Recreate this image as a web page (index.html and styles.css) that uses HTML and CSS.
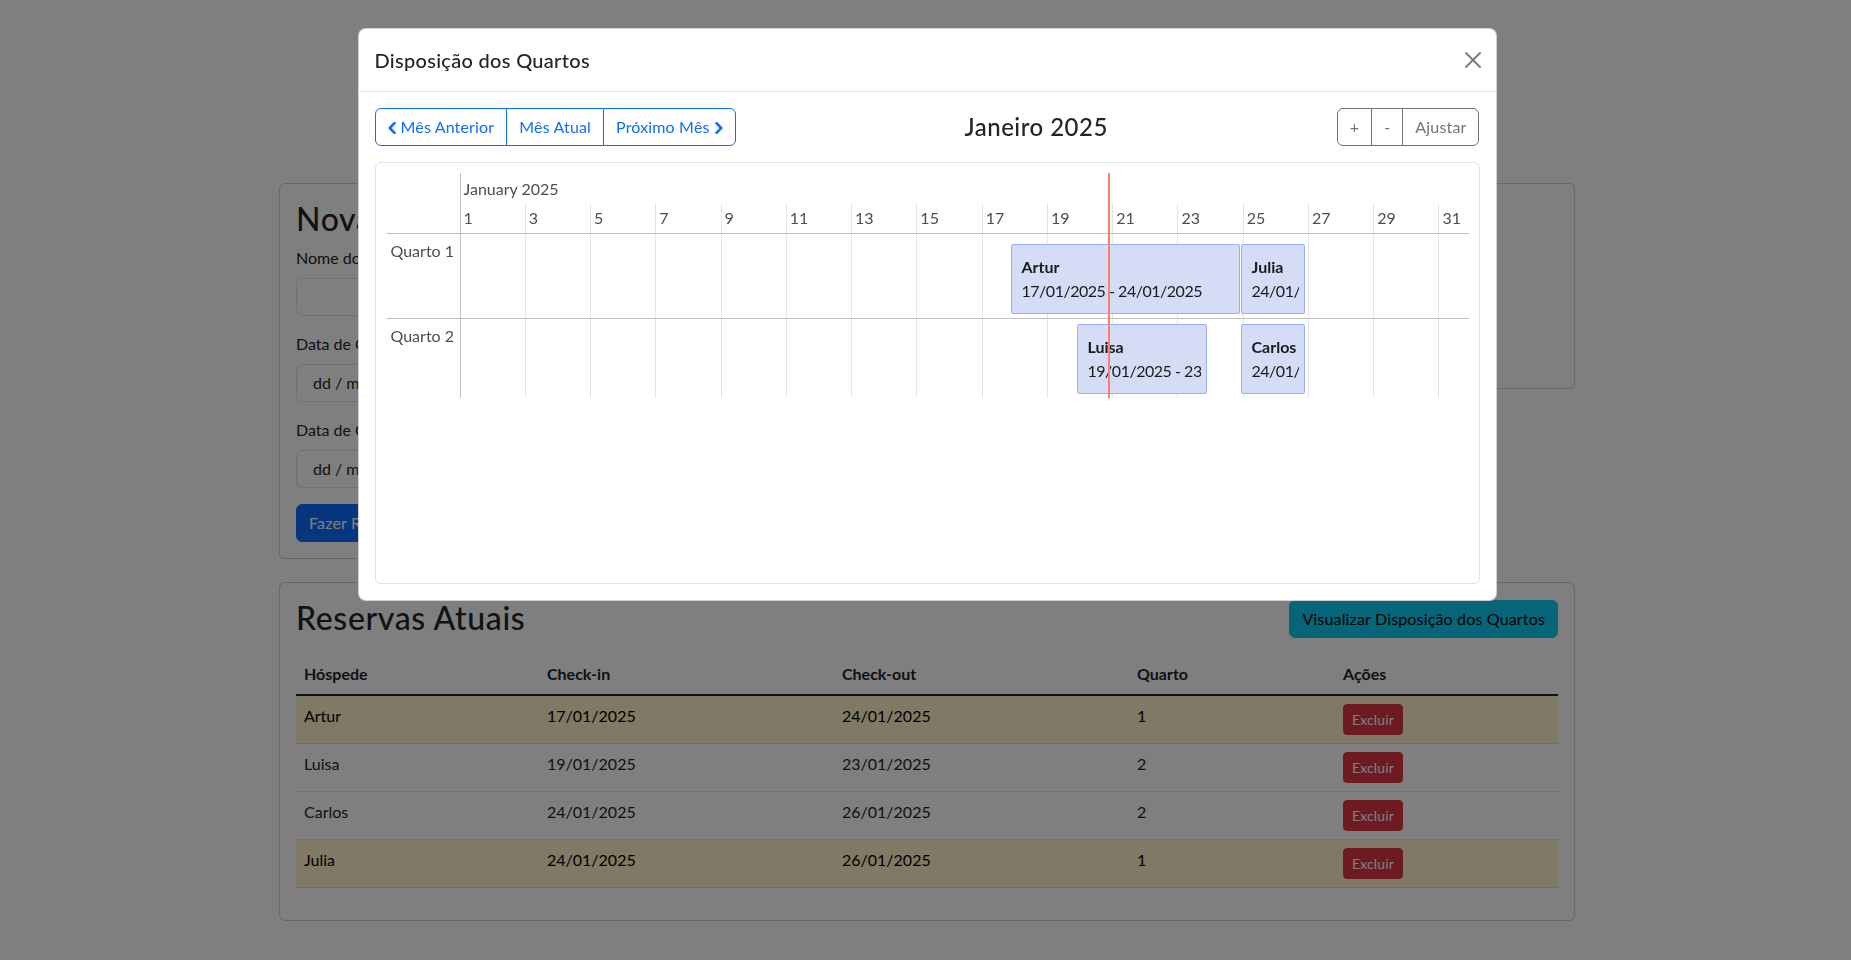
FILE: index.html
```html
<!DOCTYPE html>
<html lang="pt-BR">
<head>
<meta charset="utf-8">
<title>Reservas</title>
<link rel="stylesheet" href="styles.css">
</head>
<body>
<div class="page">
  <div class="top-row">
    <div class="card">
      <div class="card-body">
        <h2 class="card-title">Nova Reserva</h2>
        <form class="form">
          <div class="field">
            <label class="form-label">Nome do Hóspede</label>
            <div class="form-control"></div>
          </div>
          <div class="field">
            <label class="form-label">Data de Check-in</label>
            <div class="form-control date">dd / mm / aaaa</div>
          </div>
          <div class="field">
            <label class="form-label">Data de Check-out</label>
            <div class="form-control date">dd / mm / aaaa</div>
          </div>
          <button type="button" class="btn btn-primary">Fazer Reserva</button>
        </form>
      </div>
    </div>
    <div class="card side-card">
      <div class="card-body"></div>
    </div>
  </div>

  <div class="card">
    <div class="card-body">
      <div class="list-head">
        <h2 class="card-title flush">Reservas Atuais</h2>
        <button type="button" class="btn btn-info">Visualizar Disposição dos Quartos</button>
      </div>
      <table class="table">
        <thead>
          <tr>
            <th class="c1">Hóspede</th>
            <th class="c2">Check-in</th>
            <th class="c3">Check-out</th>
            <th class="c4">Quarto</th>
            <th class="c5">Ações</th>
          </tr>
        </thead>
        <tbody>
          <tr class="warn">
            <td>Artur</td><td>17/01/2025</td><td>24/01/2025</td><td>1</td>
            <td><button type="button" class="btn btn-sm btn-danger">Excluir</button></td>
          </tr>
          <tr>
            <td>Luisa</td><td>19/01/2025</td><td>23/01/2025</td><td>2</td>
            <td><button type="button" class="btn btn-sm btn-danger">Excluir</button></td>
          </tr>
          <tr>
            <td>Carlos</td><td>24/01/2025</td><td>26/01/2025</td><td>2</td>
            <td><button type="button" class="btn btn-sm btn-danger">Excluir</button></td>
          </tr>
          <tr class="warn">
            <td>Julia</td><td>24/01/2025</td><td>26/01/2025</td><td>1</td>
            <td><button type="button" class="btn btn-sm btn-danger">Excluir</button></td>
          </tr>
        </tbody>
      </table>
    </div>
  </div>
</div>

<div class="backdrop"></div>

<div class="modal">
  <div class="modal-dialog">
    <div class="modal-content">
      <div class="modal-header">
        <h5 class="modal-title">Disposição dos Quartos</h5>
        <button type="button" class="btn-close" aria-label="Fechar">
          <svg viewBox="0 0 16 16" width="16" height="16"><path d="M.293.293a1 1 0 0 1 1.414 0L8 6.586 14.293.293a1 1 0 1 1 1.414 1.414L9.414 8l6.293 6.293a1 1 0 0 1-1.414 1.414L8 9.414l-6.293 6.293a1 1 0 0 1-1.414-1.414L6.586 8 .293 1.707a1 1 0 0 1 0-1.414z" fill="#000"/></svg>
        </button>
      </div>
      <div class="modal-body">
        <div class="toolbar">
          <div class="btn-group">
            <button type="button" class="btn btn-outline-primary"><svg class="chev" viewBox="0 0 8 12" width="8" height="12"><path d="M6.5 1.2 1.8 6l4.7 4.8" fill="none" stroke="currentColor" stroke-width="2.6" stroke-linecap="round" stroke-linejoin="round"/></svg>Mês Anterior</button>
            <button type="button" class="btn btn-outline-primary">Mês Atual</button>
            <button type="button" class="btn btn-outline-primary">Próximo Mês<svg class="chev after" viewBox="0 0 8 12" width="8" height="12"><path d="M1.5 1.2 6.2 6l-4.7 4.8" fill="none" stroke="currentColor" stroke-width="2.6" stroke-linecap="round" stroke-linejoin="round"/></svg></button>
          </div>
          <h4 class="month-title">Janeiro 2025</h4>
          <div class="btn-group">
            <button type="button" class="btn btn-outline-secondary">+</button>
            <button type="button" class="btn btn-outline-secondary">-</button>
            <button type="button" class="btn btn-outline-secondary">Ajustar</button>
          </div>
        </div>

        <div class="chart">
          <div class="timeline">
            <div class="tl-corner"></div>
            <div class="tl-major">January 2025</div>
            <div class="tl-grid">
              <span></span><span></span><span></span><span></span><span></span><span></span><span></span><span></span><span></span><span></span><span></span><span></span><span></span><span></span><span></span><span class="last"></span>
            </div>
            <div class="tl-minor">
              <span>1</span><span>3</span><span>5</span><span>7</span><span>9</span><span>11</span><span>13</span><span>15</span><span>17</span><span>19</span><span>21</span><span>23</span><span>25</span><span>27</span><span>29</span><span class="last">31</span>
            </div>

            <div class="tl-label row-1">Quarto 1</div>
            <div class="tl-lane row-1 lane-1">
              <div class="tl-item" style="left:550px;width:229px"><div class="tl-item-content"><div class="tl-name">Artur</div><div class="tl-dates">17/01/2025 - 24/01/2025</div></div></div>
              <div class="tl-item" style="left:780px;width:64px"><div class="tl-item-content"><div class="tl-name">Julia</div><div class="tl-dates">24/01/2025 - 26/01/2025</div></div></div>
            </div>

            <div class="tl-label row-2">Quarto 2</div>
            <div class="tl-lane row-2 lane-2">
              <div class="tl-item" style="left:616px;width:130px"><div class="tl-item-content"><div class="tl-name">Luisa</div><div class="tl-dates">19/01/2025 - 23/01/2025</div></div></div>
              <div class="tl-item" style="left:780px;width:64px"><div class="tl-item-content"><div class="tl-name">Carlos</div><div class="tl-dates">24/01/2025 - 26/01/2025</div></div></div>
            </div>

            <div class="tl-now"></div>
          </div>
        </div>
      </div>
    </div>
  </div>
</div>
</body>
</html>
```

FILE: styles.css
```css
* { box-sizing: border-box; }

html, body { margin: 0; }

body {
  font-family: Lato, "Noto Sans", sans-serif;
  font-size: 16px;
  line-height: 1.5;
  color: #212529;
  background: #fff;
}

/* ---------- page behind the modal ---------- */
.page {
  width: 1320px;
  margin-left: calc(50% - 658.5px);
  padding: 183px 12px 0;
}

.top-row {
  display: grid;
  grid-template-columns: 1fr 1fr;
  gap: 24px;
  align-items: start;
  margin-bottom: 23px;
}

.card {
  background: #fff;
  border: 1px solid rgba(0, 0, 0, .175);
  border-radius: 6px;
}

.card-body { padding: 16px; }

.side-card .card-body { min-height: 204px; }

.card-title {
  margin: 0 0 8px;
  font-size: 32px;
  font-weight: 500;
  line-height: 1.2;
  letter-spacing: .02em;
}

.card-title.flush { margin: 0; }

.field { margin-bottom: 16px; }

.form-label {
  display: inline-block;
  margin-bottom: 8px;
}

.form-control {
  display: block;
  width: 100%;
  height: 38px;
  padding: 6px 12px;
  border: 1px solid #dee2e6;
  border-radius: 6px;
  background: #fff;
}

.form-control.date { padding-left: 16px; }

.btn {
  display: inline-block;
  font-family: inherit;
  font-size: 16px;
  font-weight: 400;
  line-height: 1.5;
  padding: 6px 12px;
  border: 1px solid transparent;
  border-radius: 6px;
  background: transparent;
  color: #212529;
  white-space: nowrap;
  letter-spacing: .01em;
  cursor: pointer;
}

.btn-sm {
  padding: 4px 8px;
  font-size: 14px;
  border-radius: 4px;
}

.btn-primary { background: #0d6efd; border-color: #0d6efd; color: #fff; }
.btn-info { background: #0dcaf0; border-color: #0dcaf0; color: #000; }
.btn-danger { background: #dc3545; border-color: #dc3545; color: #fff; }

.list-head {
  display: flex;
  justify-content: space-between;
  align-items: center;
  margin-bottom: 16px;
}

.table {
  width: 100%;
  border-collapse: collapse;
  margin-bottom: 16px;
  color: #212529;
}

.table th,
.table td {
  padding: 8px;
  text-align: left;
  vertical-align: top;
  border-bottom: 1px solid #dee2e6;
}

.table th { font-weight: 700; }

.table tbody { border-top: 2px solid #212529; }

.table .c1 { width: 243px; }
.table .c2 { width: 295px; }
.table .c3 { width: 295px; }
.table .c4 { width: 206px; }
.table .c5 { width: 223px; }

.table tr.warn td {
  background: #fff3cd;
  color: #000;
  border-bottom-color: #e6dbb9;
}

/* ---------- modal ---------- */
.backdrop {
  position: fixed;
  inset: 0;
  background: rgba(0, 0, 0, .5);
}

.modal {
  position: fixed;
  inset: 0;
  padding-left: 3px;
}

.modal-dialog {
  width: 1139px;
  margin: 28px auto 0;
}

.modal-content {
  background: #fff;
  border: 1px solid rgba(0, 0, 0, .175);
  border-radius: 8px;
}

.modal-header {
  display: flex;
  justify-content: space-between;
  align-items: center;
  padding: 16px;
  border-bottom: 1px solid #dee2e6;
}

.modal-title {
  margin: 0;
  font-size: 20px;
  font-weight: 500;
  line-height: 1.5;
  letter-spacing: .015em;
}

.btn-close {
  display: block;
  width: 16px;
  height: 16px;
  padding: 0;
  margin-right: -1px;
  border: 0;
  background: transparent;
  opacity: .5;
  cursor: pointer;
}

.btn-close svg { display: block; }

.modal-body { padding: 16px; }

.toolbar {
  display: flex;
  justify-content: space-between;
  align-items: center;
  margin-bottom: 16px;
}

.month-title {
  margin: 0;
  font-size: 24px;
  font-weight: 500;
  line-height: 1.2;
  letter-spacing: .02em;
}

.btn-group { display: inline-flex; }

.btn-group .btn + .btn { margin-left: -1px; }

.btn-group .btn:not(:first-child) {
  border-top-left-radius: 0;
  border-bottom-left-radius: 0;
}

.btn-group .btn:not(:last-child) {
  border-top-right-radius: 0;
  border-bottom-right-radius: 0;
}

.btn-outline-primary { color: #0d6efd; border-color: #0d6efd; }
.btn-outline-secondary { color: #6c757d; border-color: #6c757d; }

.chev {
  display: inline-block;
  vertical-align: -1px;
  margin-right: 5px;
}

.chev.after {
  margin-right: 0;
  margin-left: 5px;
}

/* ---------- timeline ---------- */
.chart {
  height: 422px;
  padding: 10px;
  border: 1px solid #dee2e6;
  border-radius: 6px;
}

.timeline {
  position: relative;
  display: grid;
  grid-template-columns: 74px 1fr;
  grid-template-rows: 30px 30px 85px 80px;
  color: #4d4d4d;
}

.tl-corner {
  grid-column: 1;
  grid-row: 1 / span 2;
}

.tl-major {
  grid-column: 2;
  grid-row: 1;
  border-left: 1px solid #bfbfbf;
  padding: 4px 3px 0;
}

.tl-grid {
  grid-column: 2;
  grid-row: 2 / 5;
  display: flex;
  padding-left: 1px;
}

.tl-grid span {
  flex: 0 0 65.27px;
  border-right: 1px solid #e5e5e5;
}

.tl-grid span.last {
  flex: 1 1 auto;
  border-right: 0;
}

.tl-minor {
  grid-column: 2;
  grid-row: 2;
  display: flex;
  border-left: 1px solid #bfbfbf;
}

.tl-minor span {
  flex: 0 0 65.27px;
  padding: 3px 3px 0;
  white-space: nowrap;
}

.tl-minor span.last { flex: 1 1 auto; }

.row-1 { grid-row: 3; }
.row-2 { grid-row: 4; }

.tl-label {
  grid-column: 1;
  border-top: 1px solid #bfbfbf;
  padding: 5px;
}

.tl-lane {
  grid-column: 2;
  position: relative;
  border-top: 1px solid #bfbfbf;
  border-left: 1px solid #bfbfbf;
}

.tl-item {
  position: absolute;
  top: 10px;
  padding: 5px;
  background: #d5ddf6;
  border: 1px solid #97b0f8;
  border-radius: 2px;
  color: #1a1a1a;
  z-index: 1;
}

.lane-2 .tl-item { top: 5px; }

.tl-item-content {
  padding: 5px;
  overflow: hidden;
  white-space: nowrap;
}

.tl-name { font-weight: 700; }

.tl-dates { letter-spacing: -.03em; }

.tl-now {
  position: absolute;
  top: 0;
  left: 722px;
  width: 2px;
  height: 225px;
  background: #ff7f6e;
  z-index: 2;
}
```
